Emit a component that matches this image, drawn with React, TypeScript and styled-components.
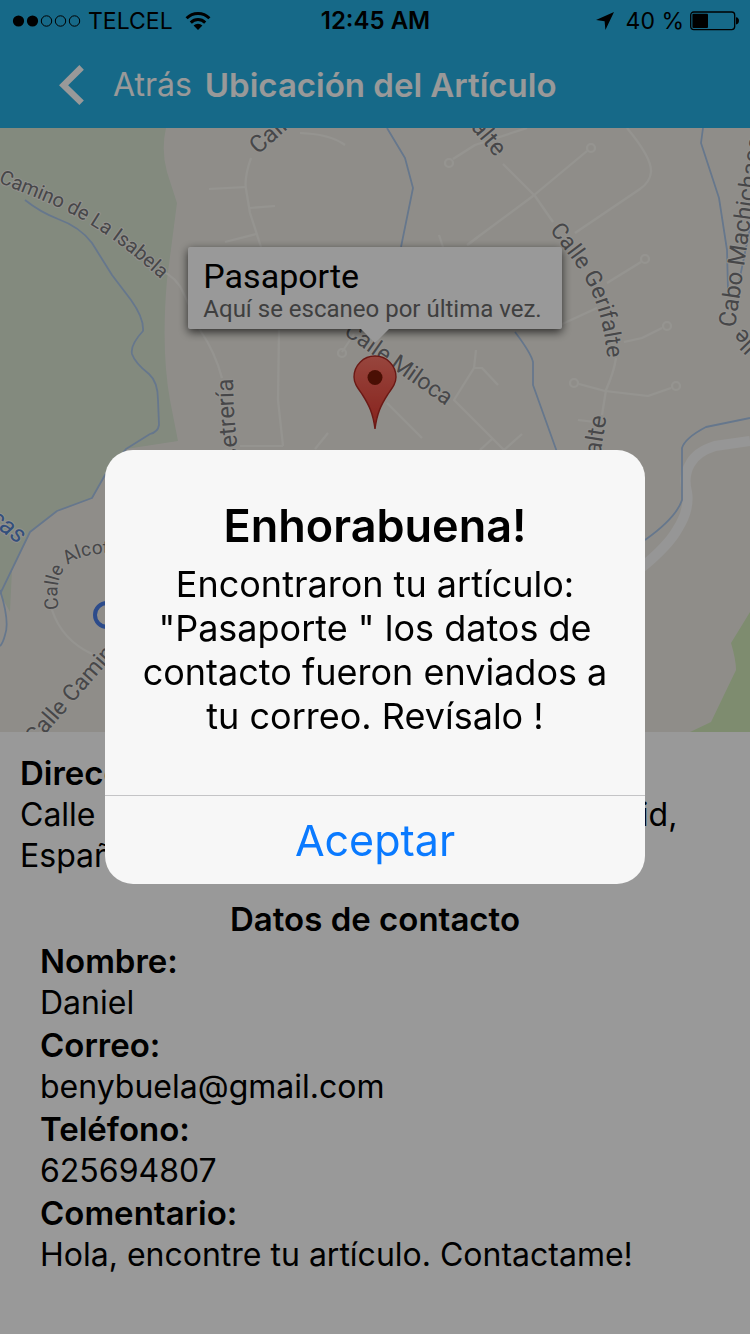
import React from 'react';
import styled, { createGlobalStyle } from 'styled-components';

const GlobalStyle = createGlobalStyle`
  * { box-sizing: border-box; }
  body {
    margin: 0;
    background: #fff;
    color: #000;
    font-family: Inter, "Liberation Sans", sans-serif;
  }
  h1, h2, p, dl, dt, dd { margin: 0; }
`;

const Screen = styled.div`
  min-height: 100vh;
  display: flex;
  flex-direction: column;
  overflow: hidden;
`;

const TopBar = styled.header`
  background: #26b0e3;
`;

const StatusBar = styled.div`
  display: grid;
  grid-template-columns: 1fr auto 1fr;
  align-items: center;
  height: 41px;
  padding: 0 11px 0 12px;
  font-size: 23px;
  line-height: 28px;
`;

const StatusGroup = styled.div<{ $end?: boolean }>`
  display: flex;
  align-items: center;
  gap: 12px;
  justify-content: ${(p) => (p.$end ? 'flex-end' : 'flex-start')};
`;

const StatusPair = styled.span`
  display: flex;
  align-items: center;
  gap: 6px;
`;

const Clock = styled.time`
  font-size: 24px;
  font-weight: 600;
`;

const NavBar = styled.nav`
  display: flex;
  align-items: center;
  gap: 13px;
  height: 87px;
  padding: 0 58px;
  color: #fff;
`;

const BackButton = styled.button`
  display: flex;
  align-items: center;
  gap: 28px;
  padding: 0;
  border: 0;
  background: none;
  color: inherit;
  font-family: inherit;
  font-size: 32px;
  line-height: 40px;
`;

const NavTitle = styled.h1`
  font-size: 33px;
  line-height: 40px;
  font-weight: 600;
  white-space: nowrap;
`;

const MapArea = styled.section`
  position: relative;
  height: 604px;
  background: #efece5;
`;

const MapDrawing = styled.svg`
  display: block;
  width: 100%;
  height: 100%;
`;

const MarkerAnchor = styled.div`
  position: absolute;
  left: 0;
  right: 0;
  bottom: 50%;
  display: flex;
  flex-direction: column;
  align-items: center;
`;

const Callout = styled.div`
  padding: 11px 20px 5px 15px;
  background: #fff;
  border-radius: 2px;
  box-shadow: 0 3px 10px rgba(0, 0, 0, 0.7);
  font-family: Roboto, sans-serif;
  white-space: nowrap;
`;

const CalloutTitle = styled.p`
  font-size: 34px;
  line-height: 36px;
`;

const CalloutText = styled.p`
  color: #6a6a6a;
  font-size: 24px;
  line-height: 30px;
`;

const Pointer = styled.svg`
  display: block;
  position: relative;
`;

const Pin = styled.svg`
  display: block;
  margin-top: 12px;
`;

const Details = styled.main`
  padding: 20px;
  font-size: 32px;
  line-height: 42px;
`;

const Address = styled.dl`
  margin-bottom: 22px;
  dd { line-height: 41px; }
`;

const Term = styled.dt`
  font-size: 33px;
  font-weight: 600;
`;

const Contact = styled.dl`
  padding: 0 20px;
`;

const SectionTitle = styled.h2`
  font-size: 33px;
  line-height: 42px;
  font-weight: 600;
  text-align: center;
`;

const Backdrop = styled.div`
  position: fixed;
  inset: 0;
  display: flex;
  align-items: center;
  justify-content: center;
  background: rgba(0, 0, 0, 0.4);
`;

const Dialog = styled.div`
  width: 72%;
  max-width: 540px;
  overflow: hidden;
  border-radius: 28px;
  background: #f7f7f7;
  text-align: center;
`;

const DialogBody = styled.div`
  padding: 50px 32px 57px;
  border-bottom: 1px solid #c4c4c6;
`;

const DialogTitle = styled.h2`
  margin-bottom: 10px;
  font-size: 45px;
  line-height: 52px;
  font-weight: 600;
`;

const DialogText = styled.p`
  font-size: 36px;
  line-height: 44px;
`;

const DialogButton = styled.button`
  display: block;
  width: 100%;
  height: 88px;
  padding: 0;
  border: 0;
  background: none;
  color: #0a7aff;
  font-family: inherit;
  font-size: 43px;
  line-height: 52px;
`;

const SignalIcon = () => (
  <svg width="70" height="14" viewBox="0 0 70 14" aria-hidden="true">
    {[0, 1, 2, 3, 4].map((i) => (
      <circle
        key={i}
        cx={6.5 + i * 14}
        cy="7"
        r={i < 2 ? 5.6 : 5.2}
        fill={i < 2 ? '#000' : 'none'}
        stroke="#000"
        strokeWidth={i < 2 ? 0 : 1}
      />
    ))}
  </svg>
);

const WifiIcon = () => (
  <svg width="26" height="20" viewBox="0 0 26 20" fill="none" stroke="#000" strokeWidth="3" aria-hidden="true">
    <path d="M1.6 7.2a16.2 16.2 0 0 1 22.8 0" />
    <path d="M5.8 11.6a10.2 10.2 0 0 1 14.4 0" />
    <path d="M13 19 8.6 14.6a6.2 6.2 0 0 1 8.8 0z" fill="#000" stroke="none" />
  </svg>
);

const LocationIcon = () => (
  <svg width="18" height="18" viewBox="0 0 18 18" aria-hidden="true">
    <path d="M18 0 9.4 18 8.6 9.2 0 8z" />
  </svg>
);

const BatteryIcon = () => (
  <svg width="49" height="20" viewBox="0 0 49 20" aria-hidden="true">
    <rect x="0.7" y="1" width="44" height="17.6" rx="3" fill="none" stroke="#000" strokeWidth="1.3" />
    <rect x="2.4" y="2.7" width="15.6" height="14.2" rx="1" />
    <path d="M46 6.2c4 0 4 7.2 0 7.2z" />
  </svg>
);

const ChevronIcon = () => (
  <svg width="27" height="42" viewBox="0 0 27 42" fill="none" stroke="currentColor" strokeWidth="6.4" aria-hidden="true">
    <path d="M23.6 3.4 5.6 21.2l18 17.6" />
  </svg>
);

const streets = [
  'M251 158Q244 178 246 189L250 213L261 247',
  'M209 189L246 187M250 208L275 206M225 242L256 234',
  'M300 133Q330 134 345 145',
  'M160 270Q177 277 184 294L200 330Q215 352 222 378',
  'M279 330L278 400L283 446M240 446L283 446',
  'M354 334L342 352M387 403L422 438M315 449L328 433',
  'M453 159L475 145L527 128M587 151L533 196L467 245',
  'M503 164L535 196L553 222',
  'M627 128Q652 158 651 172Q650 182 640 189L575 233',
  'M641 262L607 283M597 308L560 325M662 328L642 338L624 342',
  'M616 358Q614 372 606 390L602 415M579 384L605 391L648 396L671 388M578 420L595 422',
  'M476 350L474 368L454 400L504 450L522 434M474 368L482 368L498 385M480 450L492 439',
  'M439 320L445 309M468 245L478 237M439 235L443 247',
  'M52 610Q62 640 92 654',
];

const culDeSacs = [[449, 163], [591, 148], [645, 259], [667, 326], [574, 383], [676, 386], [342, 353]];

const rivers = [
  'M25 200Q40 212 58 219Q80 227 92 243L112 275L131 300Q144 318 143 331Q130 345 132 354Q135 363 149 374Q158 382 158 400L159 425Q158 432 150 434L126 449L105 475L92 498L57 511L30 532L0 594',
  'M0 590Q10 622 5 635Q3 643 0 646',
  'M387 128L405 158L413 188L401 247M515 332Q531 353 533 362L533 385L557 452',
  'M703 128L701 143L719 198L727 250L728 290M750 228L739 282',
  'M750 418L706 427Q685 438 682 448L682 500Q676 518 645 540',
];

const labels = [
  { id: 'isabela', d: 'M-2 182C46 204 84 208 165 283', text: 'Camino de La Isabela', size: 20 },
  { id: 'north', d: 'M258 155L317 103', text: 'Calle Cetrería', size: 24 },
  { id: 'gerifalteNorth', d: 'M456 110L520 187', text: 'rifalte', size: 24 },
  { id: 'gerifalte', d: 'M549 230C588 278 603 298 609 375', text: 'Calle Gerifalte', size: 23 },
  { id: 'miloca', d: 'M343 334L466 420', text: 'Calle Miloca', size: 23 },
  { id: 'cetreria', d: 'M240 462Q232 420 233 350', text: 'Cetrería', size: 24 },
  { id: 'gerifalteSouth', d: 'M599 464L610 395', text: 'falte', size: 24 },
  { id: 'machichaco', d: 'M735 328L764 130', text: 'Cabo Machichaco', size: 24 },
  { id: 'east', d: 'M778 364L731 316', text: 'Calle', size: 23 },
  { id: 'alcotan', d: 'M59 609C50 562 78 548 132 556', text: 'Calle Alcotán', size: 19 },
  { id: 'camino', d: 'M35 746L126 642', text: 'Calle Camino', size: 23 },
];

const StreetMap = () => (
  <MapDrawing viewBox="0 128 750 604" preserveAspectRatio="xMidYMid slice" role="img" aria-label="Mapa">
    <path
      d="M0 128H166Q161 150 167 172L177 203L167 280Q161 350 170 400L178 441L126 449L105 475L92 498L57 511L30 532L12 570L10 612L0 594Z"
      fill="#dae6d3"
    />
    <path d="M750 612L731 643Q736 660 736 670L711 722L690 732H750Z" fill="#d2eaba" />
    <g fill="none" stroke="#f9f7f1" strokeWidth="2.2" strokeLinejoin="round">
      {streets.map((d) => <path key={d} d={d} />)}
      {culDeSacs.map(([x, y]) => <circle key={`${x}-${y}`} cx={x} cy={y} r="4" />)}
    </g>
    <path
      d="M750 441L715 446Q696 452 690 464Q683 476 687 492Q690 510 677 530Q668 546 640 569"
      fill="none"
      stroke="#fbfafa"
      strokeWidth="10"
    />
    <g fill="none" stroke="#aac6ea" strokeWidth="1.8" strokeLinejoin="round">
      {rivers.map((d) => <path key={d} d={d} />)}
    </g>
    <circle cx="107" cy="615" r="12" fill="none" stroke="#4a7de8" strokeWidth="4" />
    <g
      fontFamily="Roboto, sans-serif"
      fill="#77777a"
      stroke="#f4f2ed"
      strokeWidth="2"
      strokeLinejoin="round"
      paintOrder="stroke"
    >
      {labels.map((l) => (
        <g key={l.id}>
          <path id={l.id} d={l.d} fill="none" stroke="none" />
          <text fontSize={l.size}>
            <textPath href={`#${l.id}`}>{l.text}</textPath>
          </text>
        </g>
      ))}
      <path id="stream" d="M-12 521L41 562" fill="none" stroke="none" />
      <text fontSize="25" fontStyle="italic" fill="#5584cf">
        <textPath href="#stream">cas</textPath>
      </text>
    </g>
  </MapDrawing>
);

const PinIcon = () => (
  <Pin width="44" height="75" viewBox="0 0 44 75" aria-hidden="true">
    <defs>
      <linearGradient id="pinFill" x1="0" y1="0" x2="0" y2="1">
        <stop offset="0" stopColor="#fd7567" />
        <stop offset="1" stopColor="#e1392f" />
      </linearGradient>
    </defs>
    <path
      d="M22 74C20 58 16 50 9 39C4 32 1 28 1 22A21 21 0 0 1 43 22C43 28 40 32 35 39C28 50 24 58 22 74Z"
      fill="url(#pinFill)"
      stroke="#b22b24"
      strokeWidth="1.4"
    />
    <circle cx="22" cy="22.5" r="7.5" fill="#7c1a08" />
  </Pin>
);

const contact = [
  ['Nombre:', 'Daniel'],
  ['Correo:', 'benybuela@gmail.com'],
  ['Teléfono:', '625694807'],
  ['Comentario:', 'Hola, encontre tu artículo. Contactame!'],
];

export default function App() {
  return (
    <>
      <GlobalStyle />
      <Screen>
        <TopBar>
          <StatusBar>
            <StatusGroup>
              <StatusPair>
                <SignalIcon />
                TELCEL
              </StatusPair>
              <WifiIcon />
            </StatusGroup>
            <Clock>12:45 AM</Clock>
            <StatusGroup $end>
              <LocationIcon />
              <StatusPair>
                40 %
                <BatteryIcon />
              </StatusPair>
            </StatusGroup>
          </StatusBar>
          <NavBar>
            <BackButton type="button">
              <ChevronIcon />
              Atrás
            </BackButton>
            <NavTitle>Ubicación del Artículo</NavTitle>
          </NavBar>
        </TopBar>
        <MapArea>
          <StreetMap />
          <MarkerAnchor>
            <Callout>
              <CalloutTitle>Pasaporte</CalloutTitle>
              <CalloutText>Aquí se escaneo por última vez.</CalloutText>
            </Callout>
            <Pointer width="28" height="14" viewBox="0 0 28 14" aria-hidden="true">
              <path d="M0 0H28L14 14Z" fill="#fff" />
            </Pointer>
            <PinIcon />
          </MarkerAnchor>
        </MapArea>
        <Details>
          <Address>
            <Term>Dirección:</Term>
            <dd>Calle Miloca, 28669 Boadilla Norte, Madrid, España</dd>
          </Address>
          <SectionTitle>Datos de contacto</SectionTitle>
          <Contact>
            {contact.map(([term, value]) => (
              <React.Fragment key={term}>
                <Term>{term}</Term>
                <dd>{value}</dd>
              </React.Fragment>
            ))}
          </Contact>
        </Details>
      </Screen>
      <Backdrop>
        <Dialog role="alertdialog" aria-modal="true" aria-labelledby="alert-title" aria-describedby="alert-text">
          <DialogBody>
            <DialogTitle id="alert-title">Enhorabuena!</DialogTitle>
            <DialogText id="alert-text">
              Encontraron tu artículo: "Pasaporte " los datos de contacto fueron enviados a tu correo. Revísalo !
            </DialogText>
          </DialogBody>
          <DialogButton type="button">Aceptar</DialogButton>
        </Dialog>
      </Backdrop>
    </>
  );
}
